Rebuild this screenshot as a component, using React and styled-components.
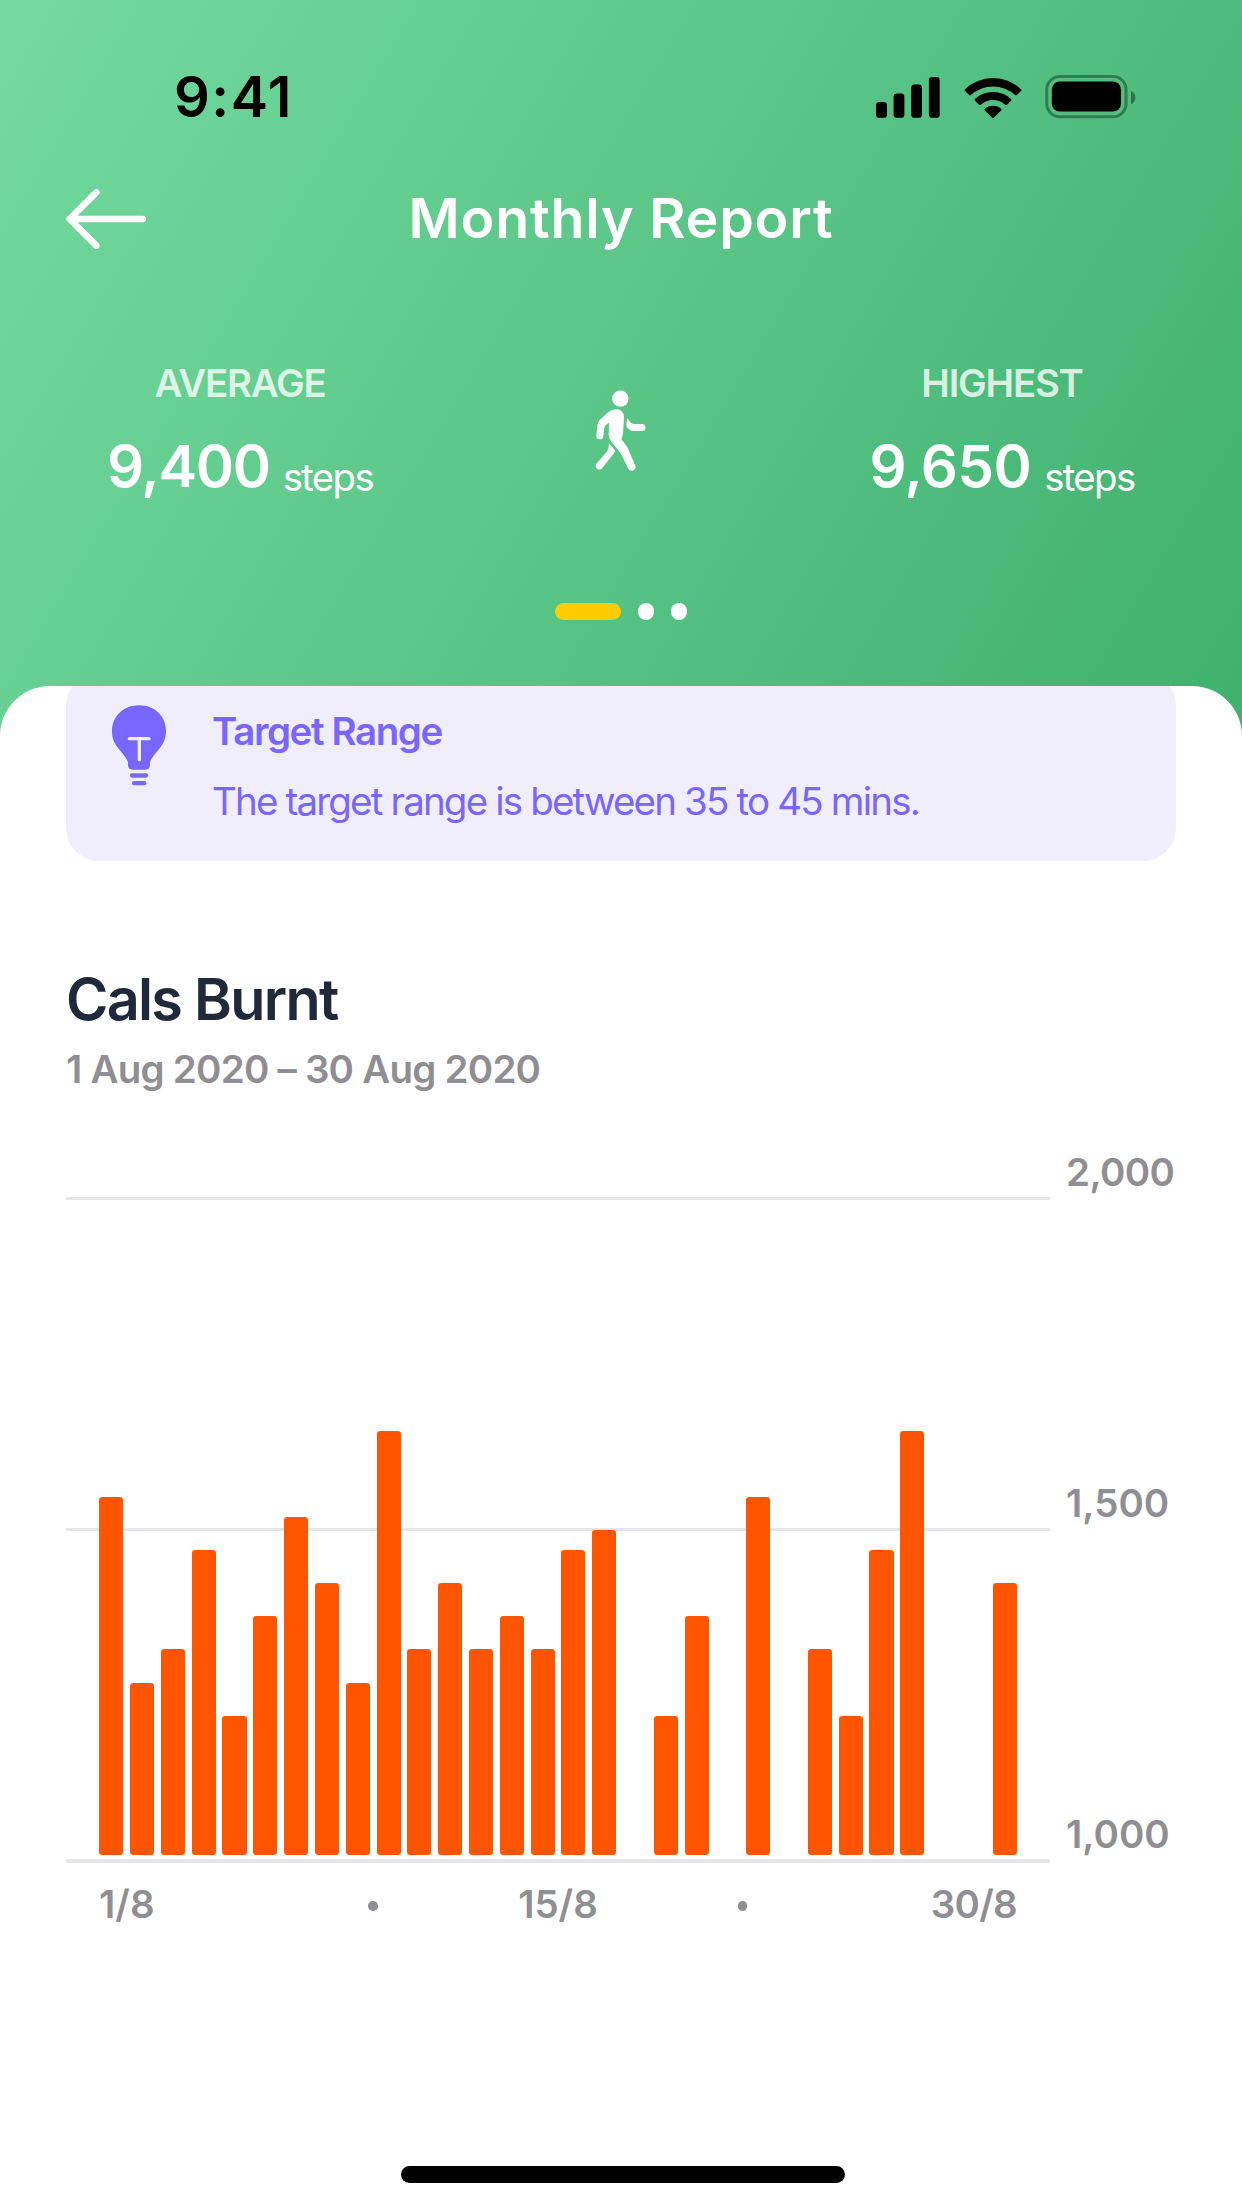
import React from "react";
import styled, { createGlobalStyle } from "styled-components";

const GlobalStyle = createGlobalStyle`
  *, *::before, *::after { box-sizing: border-box; }
  body {
    margin: 0;
    background: #fff;
    font-family: Inter, "Liberation Sans", sans-serif;
    font-kerning: normal;
  }
  svg { display: block; }
`;

const Screen = styled.main`
  width: 1242px;
  height: 2208px;
  display: flex;
  flex-direction: column;
  overflow: hidden;
  background: #fff;
`;

const Header = styled.header`
  flex: none;
  height: 746px;
  display: flex;
  flex-direction: column;
  color: #fff;
  background: linear-gradient(121deg, #74da9f 0%, #3fb06e 100%);
`;

const StatusBar = styled.div`
  height: 98px;
  margin-top: 48px;
  padding: 0 106px 0 174px;
  display: flex;
  align-items: center;
  justify-content: space-between;
  color: #000;
`;

const Clock = styled.time`
  font-size: 56px;
  line-height: 98px;
  font-weight: 600;
  letter-spacing: 1.5px;
`;

const StatusIcons = styled.div`
  display: flex;
  align-items: center;
`;

const TitleBar = styled.div`
  height: 145px;
  padding: 0 66px;
  display: grid;
  grid-template-columns: 80px 1fr 80px;
  align-items: center;
`;

const Title = styled.h1`
  margin: -1px 0 0;
  text-align: center;
  font-size: 55.5px;
  line-height: 80px;
  font-weight: 600;
  letter-spacing: 0.8px;
`;

const Stats = styled.section`
  margin-top: 62px;
  padding: 0 107px;
  display: flex;
  justify-content: space-between;
  align-items: flex-start;
`;

const Stat = styled.div`
  width: 266px;
  display: flex;
  flex-direction: column;
  align-items: center;
`;

const StatLabel = styled.span`
  font-size: 38.3px;
  line-height: 60px;
  font-weight: 600;
  letter-spacing: -1.2px;
  white-space: nowrap;
  color: rgba(255, 255, 255, 0.8);
`;

const StatValue = styled.div`
  display: flex;
  align-items: center;
  margin-top: 18px;
  height: 70px;
  gap: 13px;
  white-space: nowrap;
`;

const StatNumber = styled.span`
  font-size: 58px;
  line-height: 70px;
  font-weight: 600;
  letter-spacing: ${(p) => p.$tracking};
`;

const StatUnit = styled.span`
  font-size: 38.3px;
  line-height: 48px;
  padding-top: 21px;
  letter-spacing: -1.6px;
`;

const WalkSlot = styled.div`
  padding: 37px 1px 0 0;
`;

const Pager = styled.div`
  margin-top: 102px;
  display: flex;
  justify-content: center;
  gap: 16.6px;
`;

const PageDot = styled.span`
  width: ${(p) => (p.$active ? "66.2px" : "16.6px")};
  height: 16.6px;
  border-radius: 9px;
  background: ${(p) => (p.$active ? "#ffcc00" : "#fff")};
`;

const Sheet = styled.section`
  flex: 1;
  margin-top: -60.4px;
  padding: 0 66px;
  display: flex;
  flex-direction: column;
  overflow: hidden;
  border-radius: 50px 50px 0 0;
  background: #fff;
`;

const Tip = styled.article`
  flex: none;
  height: 188px;
  margin-top: -13px;
  padding: 32px 46px;
  display: flex;
  align-items: flex-start;
  gap: 46px;
  border-radius: 33px;
  background: #f0eefd;
  color: #7966ff;
`;

const TipText = styled.div`
  margin-top: -1.5px;
  display: flex;
  flex-direction: column;
`;

const TipTitle = styled.h2`
  margin: 0;
  font-size: 38.5px;
  line-height: 56px;
  font-weight: 600;
  letter-spacing: -1.4px;
`;

const TipBody = styled.p`
  margin: 14px 0 0;
  font-size: 38.5px;
  line-height: 56px;
  letter-spacing: -1.83px;
  white-space: nowrap;
`;

const ChartTitle = styled.h2`
  margin: 98px 0 0;
  font-size: 57.5px;
  line-height: 80px;
  font-weight: 600;
  letter-spacing: -1.7px;
  color: #20293a;
`;

const ChartRange = styled.p`
  margin: 5px 0 0;
  font-size: 38.5px;
  line-height: 50px;
  font-weight: 600;
  letter-spacing: -0.76px;
  color: #8e8e93;
`;

const Chart = styled.div`
  margin-top: 58px;
  height: 711px;
  display: grid;
  grid-template-columns: 984px 1fr;
`;

const Plot = styled.div`
  display: grid;
  grid-template: 1fr / 1fr;
`;

const GridLines = styled.div`
  grid-area: 1 / 1;
  padding-top: 45px;
  display: flex;
  flex-direction: column;
  justify-content: space-between;
`;

const GridLine = styled.span`
  height: 3.3px;
  background: #e5e5ea;
`;

const Bars = styled.div`
  grid-area: 1 / 1;
  padding: 0 33.3px 7.9px;
  display: grid;
  grid-template-columns: repeat(30, 1fr);
  column-gap: 6.62px;
  align-items: end;
`;

const Bar = styled.span`
  height: ${(p) => p.$value * 3.312}px;
  border-radius: 3.3px;
  background: #ff5500;
`;

const Scale = styled.div`
  margin-top: -5px;
  padding: 0 0 4px 16px;
  display: flex;
  flex-direction: column;
  justify-content: space-between;
`;

const AxisText = styled.span`
  font-size: 38.5px;
  line-height: 50px;
  font-weight: 600;
  letter-spacing: ${(p) => p.$tracking || "0px"};
  color: #8e8e93;
  white-space: nowrap;
`;

const Days = styled.div`
  width: 984px;
  margin-top: 16px;
  padding: 0 33.3px;
  display: grid;
  grid-template-columns: repeat(30, minmax(0, 1fr));
  column-gap: 6.62px;
`;

const Day = styled.div`
  grid-column: ${(p) => p.$from} / span ${(p) => p.$span};
  grid-row: 1;
  height: 50px;
  display: flex;
  align-items: center;
  justify-content: center;
`;

const DayDot = styled.span`
  width: 9.4px;
  height: 9.4px;
  margin-top: 5px;
  border-radius: 50%;
  background: #8e8e93;
`;

const HomeIndicator = styled.div`
  flex: none;
  width: 444px;
  height: 16.6px;
  margin: auto auto 25.2px 334.6px;
  border-radius: 9px;
  background: #000;
`;

const values = [
  108, 52, 62, 92, 42, 72, 102, 82, 52, 128, 62, 82, 62, 72, 62, 92, 98, 0, 42,
  72, 0, 108, 0, 62, 42, 92, 128, 0, 0, 82,
];

const days = [
  { from: 1, span: 2, text: "1/8" },
  { from: 9, span: 2 },
  { from: 15, span: 2, text: "15/8" },
  { from: 21, span: 2 },
  { from: 28, span: 3, text: "30/8", tracking: "-0.7px" },
];

const StatusGlyphs = () => (
  <svg width="260" height="46" viewBox="876 75 260 46">
    <rect x="876" y="103" width="11" height="15.8" rx="3.4" />
    <rect x="893.6" y="94.6" width="10.8" height="24.2" rx="3.4" />
    <rect x="911.2" y="85.6" width="10.8" height="33.2" rx="3.4" />
    <rect x="928.9" y="78" width="10.8" height="40.8" rx="3.4" />
    <path d="M964.8 90.4a40.6 40.6 0 0 1 56.4 0a.9 .9 0 0 1 0 1.3l-4.6 4.6l-1.3 0a32.4 32.4 0 0 0-44.6 0l-1.3 0l-4.6-4.6a.9 .9 0 0 1 0-1.3z" />
    <path d="M974.6 100.3a26.6 26.6 0 0 1 36.8 0l-.1 1.2l-4.6 4.4l-1.3 0a18.3 18.3 0 0 0-24.8 0l-1.3 0l-4.6-4.4z" />
    <path d="M984.7 109.9a12.4 12.4 0 0 1 16.6 0a.9 .9 0 0 1 0 1.3l-7.6 7.6a1 1 0 0 1-1.4 0l-7.6-7.6a.9 .9 0 0 1 0-1.3z" />
    <rect x="1046.8" y="77.4" width="79.2" height="40.4" rx="13" fill="none" stroke="#000" strokeWidth="3" opacity=".35" />
    <rect x="1051.8" y="82.4" width="69.2" height="30.2" rx="8.2" />
    <path d="M1131 91.8c2.7 1.2 4.4 3.8 4.4 6.8s-1.7 5.6-4.4 6.8z" opacity=".4" />
  </svg>
);

const BackArrow = () => (
  <svg width="80" height="60" viewBox="0 0 80 60" fill="none" stroke="#fff" strokeWidth="6.6" strokeLinecap="round" strokeLinejoin="round">
    <path d="M30.3 3.3L3.6 30L30.3 56.7M4 30H76.7" />
  </svg>
);

const WalkIcon = () => (
  <svg width="50.7" height="81" viewBox="107 60 152 243" fill="#fff">
    <circle cx="183" cy="86" r="24.5" />
    <path d="M172 118C185 118 194 128 194 142L191 190Q190 200 186 208L200 226Q203 230 206 236L227 285A11 11 0 0 1 207 296L184 250Q181 246 178 242L153 211Q147 204 148 190L149 158L139 166Q135 170 134 176L132 198A10 10 0 0 1 111 197L114 166Q115 157 121 150L146 127Q157 118 172 118Z" />
    <path d="M149 219L168 242Q166 248 162 252L127 296A11 11 0 0 1 110 283L142 245Q146 241 147 234Z" />
    <path d="M204 143L212 156Q217 162 224 162L248 162A10.5 10.5 0 0 1 248 183L220 183Q214 183 209 178L204 174Q200 170 201 163Z" />
  </svg>
);

const BulbIcon = () => (
  <svg width="54" height="81" viewBox="336 134 162 243" fill="#7966ff">
    <path d="M417 135C465 135 498 168 498 213C498 240 486 256 472 273Q452 296 450 306L450 314Q450 328 436 328L398 328Q384 328 384 314L384 306Q381 296 364 275C346 254 336 240 336 213C336 168 370 135 417 135Z" />
    <path d="M388 235H447M418 235V298" fill="none" stroke="#f0eefd" strokeWidth="10" strokeLinecap="round" />
    <rect x="389.5" y="339" width="55" height="13" rx="6.5" />
    <rect x="396" y="362" width="43" height="13" rx="6.5" />
  </svg>
);

export default function App() {
  return (
    <>
      <GlobalStyle />
      <Screen>
        <Header>
          <StatusBar>
            <Clock>9:41</Clock>
            <StatusIcons>
              <StatusGlyphs />
            </StatusIcons>
          </StatusBar>
          <TitleBar>
            <BackArrow />
            <Title>Monthly Report</Title>
          </TitleBar>
          <Stats>
            <Stat>
              <StatLabel>AVERAGE</StatLabel>
              <StatValue>
                <StatNumber $tracking="-1.3px">9,400</StatNumber>
                <StatUnit>steps</StatUnit>
              </StatValue>
            </Stat>
            <WalkSlot>
              <WalkIcon />
            </WalkSlot>
            <Stat>
              <StatLabel>HIGHEST</StatLabel>
              <StatValue>
                <StatNumber $tracking="-0.5px">9,650</StatNumber>
                <StatUnit>steps</StatUnit>
              </StatValue>
            </Stat>
          </Stats>
          <Pager>
            <PageDot $active />
            <PageDot />
            <PageDot />
          </Pager>
        </Header>
        <Sheet>
          <Tip>
            <BulbIcon />
            <TipText>
              <TipTitle>Target Range</TipTitle>
              <TipBody>The target range is between 35 to 45 mins.</TipBody>
            </TipText>
          </Tip>
          <ChartTitle>Cals Burnt</ChartTitle>
          <ChartRange>1 Aug 2020 – 30 Aug 2020</ChartRange>
          <Chart>
            <Plot>
              <GridLines>
                <GridLine />
                <GridLine />
                <GridLine />
              </GridLines>
              <Bars>
                {values.map((v, i) => (
                  <Bar key={i} $value={v} />
                ))}
              </Bars>
            </Plot>
            <Scale>
              <AxisText $tracking="-0.6px">2,000</AxisText>
              <AxisText>1,500</AxisText>
              <AxisText>1,000</AxisText>
            </Scale>
          </Chart>
          <Days>
            {days.map((d) => (
              <Day key={d.from} $from={d.from} $span={d.span}>
                {d.text ? <AxisText $tracking={d.tracking}>{d.text}</AxisText> : <DayDot />}
              </Day>
            ))}
          </Days>
          <HomeIndicator />
        </Sheet>
      </Screen>
    </>
  );
}
